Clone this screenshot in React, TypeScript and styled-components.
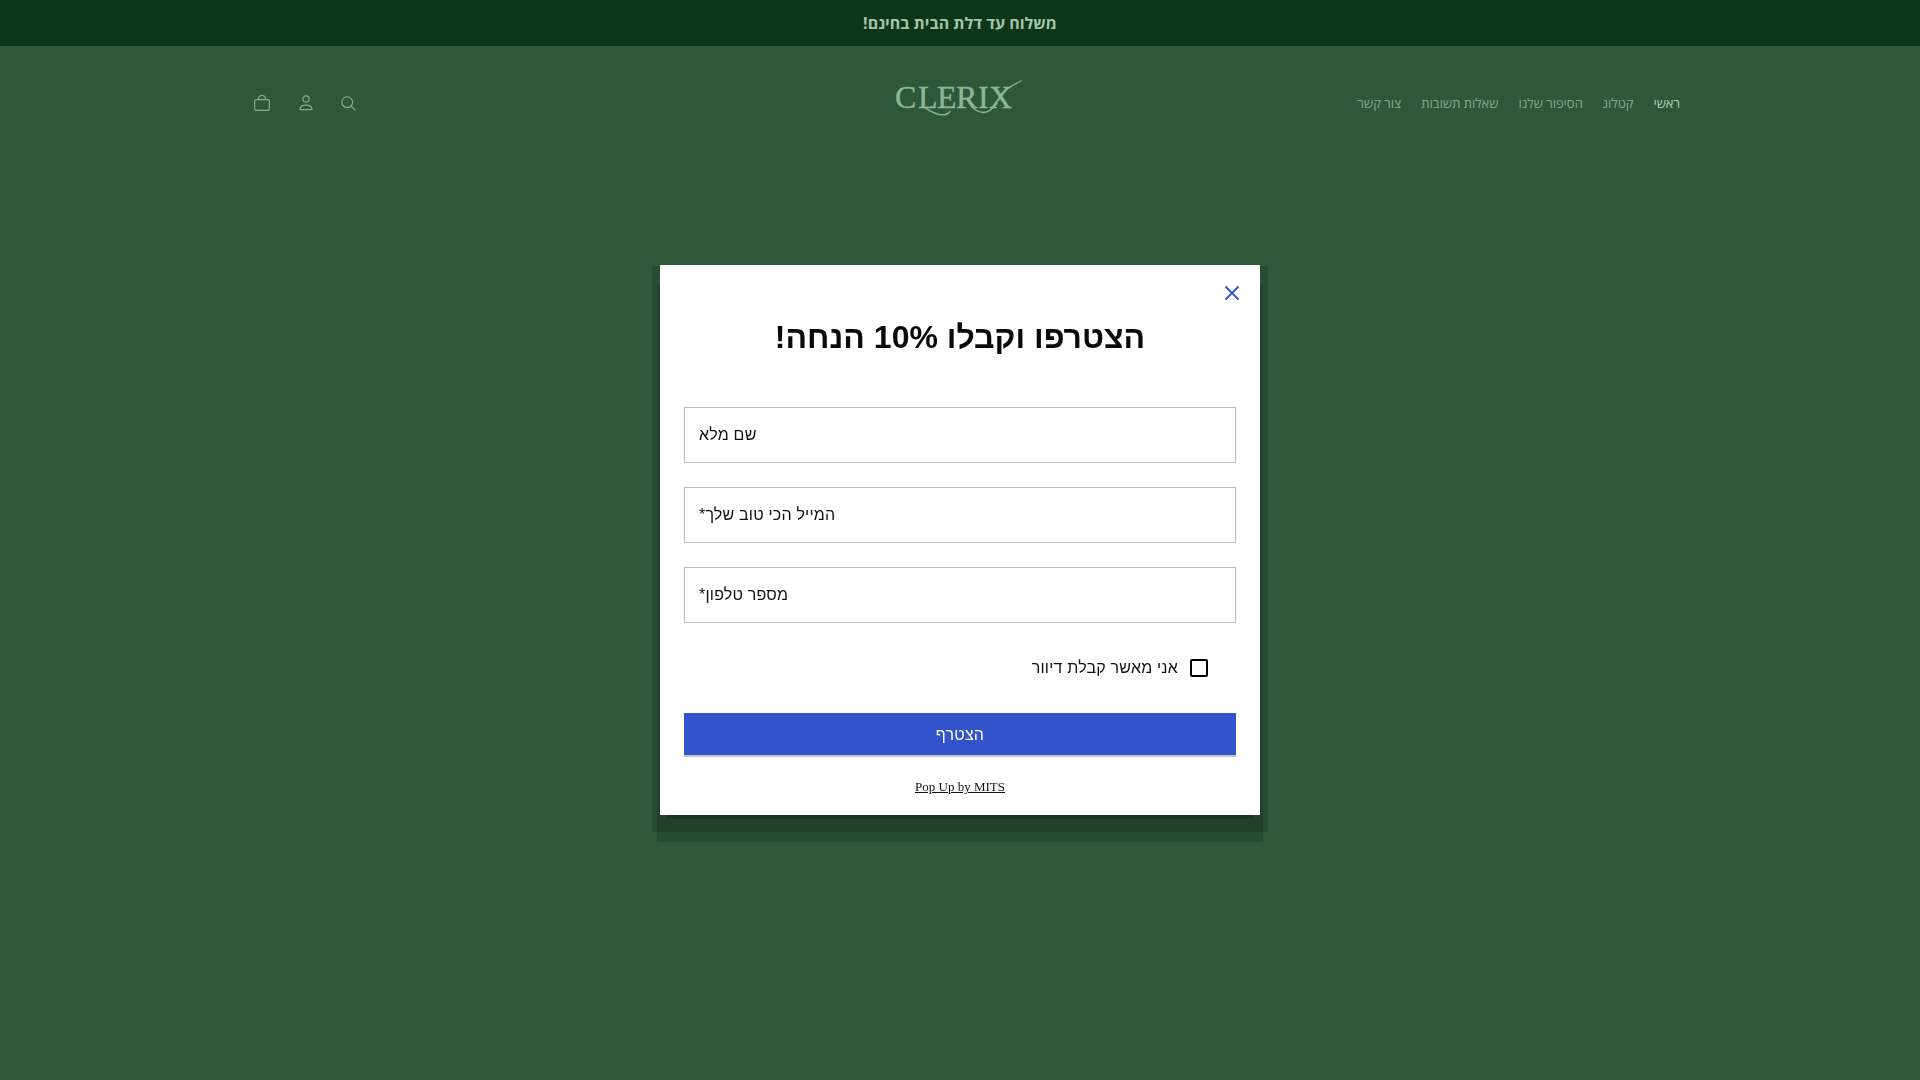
import React from "react";
import styled, { createGlobalStyle } from "styled-components";

const GlobalStyle = createGlobalStyle`
  html, body {
    margin: 0;
    padding: 0;
    height: 100%;
    background: #2f5738;
  }
  * {
    box-sizing: border-box;
  }
`;

const Page = styled.div`
  min-height: 1080px;
  background: #2f5738;
  font-family: "Open Sans", "Liberation Sans", Arial, sans-serif;
`;

const Announcement = styled.div`
  height: 46px;
  padding-bottom: 1px;
  background: #0d3517;
  color: #a3c4a8;
  font-size: 16px;
  font-weight: 700;
  display: flex;
  align-items: center;
  justify-content: center;
`;

const Header = styled.header`
  height: 114px;
  padding: 0 240px;
  display: grid;
  grid-template-columns: 1fr auto 1fr;
  align-items: center;
`;

const Nav = styled.nav`
  display: flex;
  align-items: center;
  gap: 20px;
  margin-top: -1px;
`;

const NavLink = styled.a<{ $active?: boolean }>`
  font-size: 13px;
  color: ${(p) => (p.$active ? "#b4cfb8" : "#86a98c")};
  text-decoration: none;
  white-space: nowrap;
`;

const Logo = styled.svg`
  display: block;
  width: 129px;
  height: 37px;
  margin-top: -7px;
  margin-right: 3px;
  overflow: visible;
`;

const IconRow = styled.div`
  display: flex;
  align-items: center;
  justify-content: flex-end;
  padding-left: 14px;
`;

const IconButton = styled.button<{ $gap?: number }>`
  border: 0;
  padding: 0;
  background: none;
  display: block;
  margin-left: ${(p) => p.$gap ?? 0}px;
  color: #86ab8d;
  line-height: 0;
`;

const Overlay = styled.div`
  position: fixed;
  inset: 0;
  display: flex;
  align-items: center;
  justify-content: center;
`;

const Modal = styled.form`
  position: relative;
  width: 600px;
  height: 550px;
  padding: 53px 24px 0;
  background: #fff;
  font-family: "Liberation Sans", Arial, sans-serif;
  box-shadow: 0 11px 0 -7px rgba(0, 0, 0, 0.2), 0 24px 0 3px rgba(0, 0, 0, 0.14),
    0 9px 0 8px rgba(0, 0, 0, 0.12);
`;

const CloseButton = styled.button`
  position: absolute;
  top: 20px;
  right: 20px;
  width: 16px;
  height: 16px;
  padding: 0;
  border: 0;
  background: none;
  color: #3353cc;
  line-height: 0;
`;

const Title = styled.h2`
  margin: 0 0 49px;
  font-size: 32px;
  line-height: 38px;
  padding-bottom: 2px;
  font-weight: 700;
  color: #0a0a0a;
  text-align: center;
`;

const Fields = styled.div`
  display: flex;
  flex-direction: column;
  gap: 24px;
`;

const Field = styled.input`
  display: block;
  width: 100%;
  height: 56px;
  padding: 0 14px;
  border: 1px solid #bfbfbf;
  border-radius: 0;
  outline: none;
  background: #fff;
  font-family: "Liberation Sans", Arial, sans-serif;
  font-size: 16px;
  letter-spacing: 0.2px;
  text-align: left;
  color: #111;

  &::placeholder {
    color: #111;
    opacity: 1;
  }
`;

const ConsentRow = styled.label`
  display: flex;
  align-items: center;
  gap: 12px;
  height: 18px;
  margin: 36px 28px 36px 0;
  font-size: 16px;
  letter-spacing: 0.2px;
  color: #111;
`;

const CheckBox = styled.span`
  width: 18px;
  height: 18px;
  flex: none;
  border: 2px solid #000;
  border-radius: 2px;
`;

const SubmitButton = styled.button`
  display: block;
  width: 100%;
  height: 44px;
  padding: 1px 0 0;
  border: 0;
  border-bottom: 2px solid #c4c4c8;
  background: #3353cc;
  color: #fff;
  font-family: "Liberation Sans", Arial, sans-serif;
  font-size: 16px;
  letter-spacing: 0.2px;
`;

const Credit = styled.a`
  display: block;
  margin-top: 22px;
  font-family: "Liberation Serif", "Times New Roman", serif;
  font-size: 13px;
  line-height: 16px;
  color: #111;
  text-align: center;
  text-decoration: underline;
`;

const BagIcon = () => (
  <svg width="16" height="16" viewBox="0 0 16 16" fill="none" stroke="currentColor" strokeWidth="1.2">
    <rect x="0.6" y="4.6" width="14.8" height="10.8" rx="1.6" />
    <path d="M4.4 4.6V3.9a3.3 3.3 0 0 1 7.2 0v.7" />
  </svg>
);

const UserIcon = () => (
  <svg width="14" height="16" viewBox="0 0 14 16" fill="none" stroke="currentColor" strokeWidth="1.2">
    <circle cx="7" cy="4" r="3.1" />
    <path d="M1 14.6c0-2.9 2.6-4.4 6-4.4s6 1.5 6 4.4z" strokeLinejoin="round" />
  </svg>
);

const SearchIcon = () => (
  <svg width="15" height="15" viewBox="0 0 15 15" fill="none" stroke="currentColor" strokeWidth="1.2">
    <circle cx="6.2" cy="6.2" r="5.4" />
    <path d="M10.1 10.1l4.3 4.3" />
  </svg>
);

const ClerixLogo = () => (
  <Logo viewBox="0 0 129 37" fill="none" direction="ltr">
    <text
      x="1 24 43 62 84 95"
      y="27"
      fill="#8db694"
      stroke="#8db694"
      strokeWidth="0.4"
      fontFamily="'Liberation Serif', serif"
      fontSize="32"
      direction="ltr"
    >
      CLERIX
    </text>
    <g stroke="#8db694" strokeLinecap="round">
      <path d="M30 26c4 3 9 6 15 7.500 5 1 9-.5 11-3" strokeWidth="1.500" />
      <path d="M75 22c4 5 7 9 14 9.500 5 .2 9-3 14-9" strokeWidth="1.300" />
      <path d="M105 15c6-6 11-10 22-15" strokeWidth="1.300" />
    </g>
  </Logo>
);

export default function App() {
  return (
    <Page dir="rtl">
      <GlobalStyle />
      <Announcement>משלוח עד דלת הבית בחינם!</Announcement>
      <Header>
        <Nav>
          <NavLink href="#" $active>ראשי</NavLink>
          <NavLink href="#">קטלוג</NavLink>
          <NavLink href="#">הסיפור שלנו</NavLink>
          <NavLink href="#">שאלות תשובות</NavLink>
          <NavLink href="#">צור קשר</NavLink>
        </Nav>
        <ClerixLogo />
        <IconRow>
          <IconButton type="button" aria-label="חיפוש" $gap={28}>
            <SearchIcon />
          </IconButton>
          <IconButton type="button" aria-label="חשבון" $gap={29}>
            <UserIcon />
          </IconButton>
          <IconButton type="button" aria-label="עגלה">
            <BagIcon />
          </IconButton>
        </IconRow>
      </Header>
      <Overlay>
        <Modal>
          <CloseButton type="button" aria-label="סגור">
            <svg width="16" height="16" viewBox="0 0 16 16" fill="none" stroke="currentColor" strokeWidth="1.8">
              <path d="M1.500 1.500l13 13M14.500 1.500l-13 13" />
            </svg>
          </CloseButton>
          <Title>הצטרפו וקבלו 10% הנחה!</Title>
          <Fields>
            <Field dir="rtl" placeholder="שם מלא" />
            <Field dir="rtl" placeholder="המייל הכי טוב שלך*" />
            <Field dir="rtl" placeholder="מספר טלפון*" />
          </Fields>
          <ConsentRow>
            <CheckBox />
            אני מאשר קבלת דיוור
          </ConsentRow>
          <SubmitButton type="button">הצטרף</SubmitButton>
          <Credit href="#" dir="ltr">Pop Up by MITS</Credit>
        </Modal>
      </Overlay>
    </Page>
  );
}
